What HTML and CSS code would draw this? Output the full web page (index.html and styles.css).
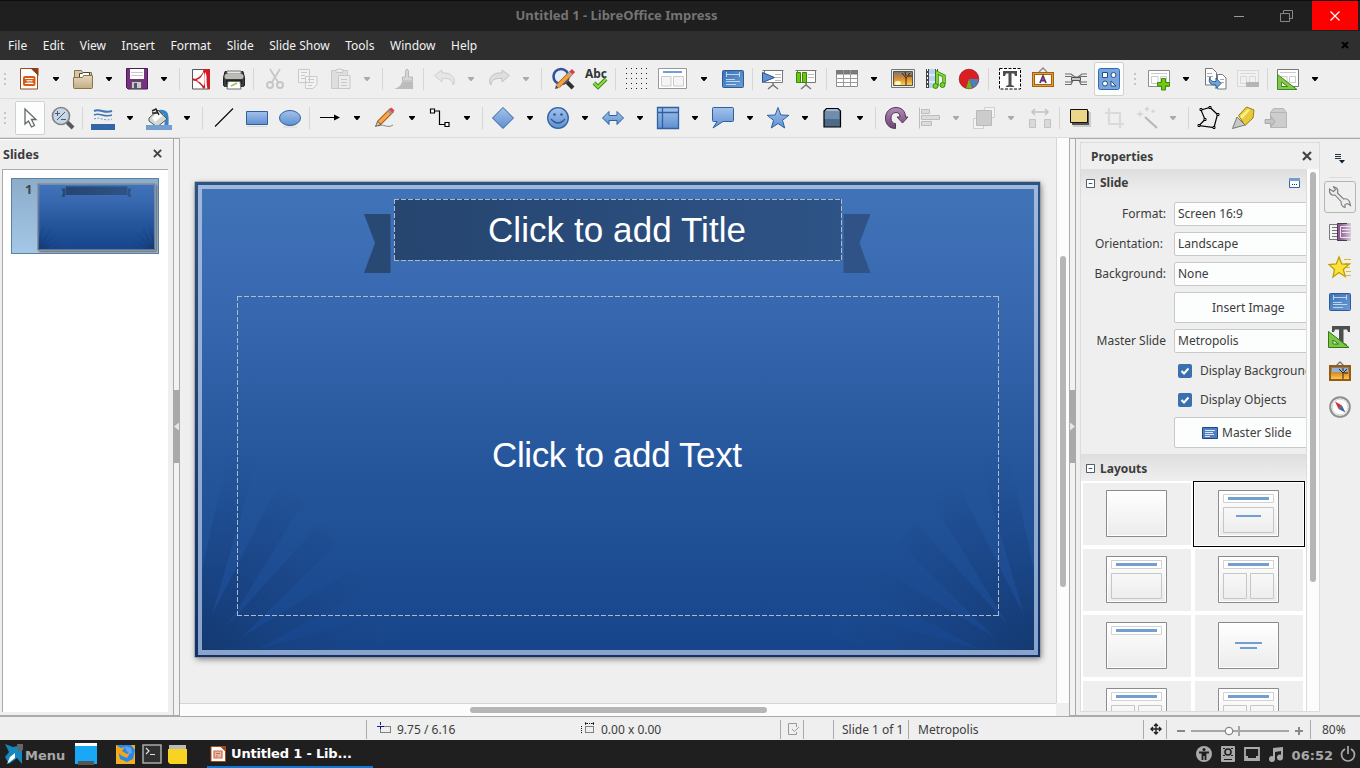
FILE: index.html
```html
<!DOCTYPE html>
<html lang="en">
<head>
<meta charset="utf-8">
<title>Untitled 1 - LibreOffice Impress</title>
<link rel="stylesheet" href="styles.css">
</head>
<body>
<svg class="defs" width="0" height="0">
  <defs>
    <linearGradient id="gBlue" x1="0" y1="0" x2="0" y2="1"><stop offset="0" stop-color="#a3c2ec"/><stop offset="1" stop-color="#5f90d0"/></linearGradient>
    <linearGradient id="gMaster" x1="0" y1="0" x2="1" y2="1"><stop offset="0" stop-color="#3d73b5"/><stop offset="1" stop-color="#6b9bd2"/></linearGradient>
    <linearGradient id="gSlide" x1="0" y1="0" x2="0" y2="1"><stop offset="0" stop-color="#4173b9"/><stop offset=".25" stop-color="#3869b0"/><stop offset=".6" stop-color="#25569c"/><stop offset="1" stop-color="#17458b"/></linearGradient>
    <linearGradient id="gEdge" x1="0" y1="0" x2="0" y2="1"><stop offset="0" stop-color="#2c5384"/><stop offset="1" stop-color="#12316a"/></linearGradient>
    <linearGradient id="gFrame" x1="0" y1="0" x2="0" y2="1"><stop offset="0" stop-color="#a0b8da"/><stop offset="1" stop-color="#8aa3ca"/></linearGradient>
    <linearGradient id="gRibbon" x1="0" y1="0" x2="1" y2="0"><stop offset="0" stop-color="#26456f"/><stop offset="1" stop-color="#2e5386"/></linearGradient>
    <linearGradient id="gTan" x1="0" y1="0" x2="0" y2="1"><stop offset="0" stop-color="#e6d8bb"/><stop offset="1" stop-color="#c3ad85"/></linearGradient>
    <linearGradient id="gPurple" x1="0" y1="0" x2="0" y2="1"><stop offset="0" stop-color="#b48db4"/><stop offset="1" stop-color="#6b4473"/></linearGradient>
    <linearGradient id="gFade" x1="0" y1="0" x2="1" y2="0"><stop offset=".2" stop-color="#8a5b8d"/><stop offset="1" stop-color="#d9c9dc"/></linearGradient>
    <linearGradient id="gGray" x1="0" y1="0" x2="0" y2="1"><stop offset="0" stop-color="#fff"/><stop offset="1" stop-color="#ececec"/></linearGradient>
    <linearGradient id="gSun" x1="0" y1="0" x2="0" y2="1"><stop offset="0" stop-color="#71767a"/><stop offset=".5" stop-color="#d78c34"/><stop offset="1" stop-color="#ffd34a"/></linearGradient>
    <radialGradient id="gRay" gradientUnits="userSpaceOnUse" cx="202" cy="650" r="230"><stop offset="0" stop-color="#143a70"/><stop offset=".3" stop-color="#163d78" stop-opacity=".6"/><stop offset=".65" stop-color="#1b4383" stop-opacity=".25"/><stop offset=".88" stop-color="#234e8e" stop-opacity=".06"/><stop offset="1" stop-color="#234e8e" stop-opacity="0"/></radialGradient>
  </defs>
  <symbol id="slide-art" viewBox="194 181 847 477">
    <path fill="#8b8f96" d="M194.500 181.500h846v476h-846z"/>
    <path fill="url(#gEdge)" d="M195 182h845v475h-845z"/>
    <path fill="url(#gFrame)" d="M198 185h840v470h-840z"/>
    <path fill="url(#gSlide)" d="M202 189h832v461h-832z"/>
    <path id="rays" fill="url(#gRay)" d="M202 650V570L235 420L261 447L212 615L283 475L303 503L228 625L320 523L337 543L242 637L353 570L373 587L258 649L400 610L405 637L345 650z"/>
    <use href="#rays" transform="translate(1236 0) scale(-1 1)"/>
    <path fill="#274974" d="M364 214h26.500v59H364l11-30z"/>
    <path fill="#2f5387" d="M843.500 214h27l-11 29 11 30h-27z"/>
    <path fill="url(#gRibbon)" d="M394 199h447v61h-447z"/>
  </symbol>
  <symbol id="dn" viewBox="0 0 8 4"><path d="M1 0h6v1L4.500 4h-1L1 1z"/></symbol>
  <symbol id="grip" viewBox="0 0 2 14"><path fill="#c6c6c6" d="M0 1h2v2H0zM0 6h2v2H0zM0 11h2v2H0z"/></symbol>

  <symbol id="impress" viewBox="0 0 24 24"><path fill="#fff" stroke="#984b1c" d="M3.500 1.500h11l6 6v14.500h-17z"/><path fill="#8a3f15" d="M13 1h8.500v8z"/><path fill="#fff" d="M14 2l6 6-5 .5z"/><rect x="6" y="9" width="12.500" height="10" rx="2" fill="#d85a14"/><path stroke="#fff" d="M8 11.500h8.500M8 16.500h8.500"/><path stroke="#fff" d="M9.500 13.500h6M9.500 15h6" stroke-width=".8"/></symbol>
  <symbol id="folder" viewBox="0 0 24 24"><path fill="#d8c7a4" stroke="#8c7449" d="M3.500 20V3.500h7l1 2h9V12"/><path fill="#fff" stroke="#444" d="M8.500 14V6.500h3l1-1h6V14"/><path fill="url(#gTan)" stroke="#8c7449" d="M2.500 10.500h9l1-2h9v12q0 1-1 1h-17q-1 0-1-1z"/></symbol>
  <symbol id="save" viewBox="0 0 24 24"><path fill="#783182" stroke="#4b1a57" d="M1.500 1.500h21v20.500H3L1.500 20.500z"/><path fill="#fff" d="M5 2h14v10H5z"/><path stroke="#c8c8c8" d="M6 5.500h12M6 8.500h12"/><path fill="#c9c9c9" stroke="#555" d="M6.500 14.500h10v7h-10z"/><path fill="#556" d="M9 16h3v5H9z"/></symbol>
  <symbol id="pdf" viewBox="0 0 24 24"><path fill="#fff" stroke="#555" d="M3.500 2.500h17v19.500h-17z"/><path fill="#cf1d25" d="M13.500 2H21v20h-2.500c-1-4-1-8-1-12 0-3-1-5-4-8z"/><path fill="none" stroke="#cf1d25" stroke-width="1.800" d="M15.500 2.500C15 7 12 11 4.500 13.500M4 12c6 2 9 5 11 9.500M15.500 3c-1.500 6-1.500 12 0 18"/><path fill="#fff" d="M15 5c-3 5-4 9-8 9 4 0 6 3 8 5z"/></symbol>
  <symbol id="print" viewBox="0 0 24 24"><path fill="#3a3d3b" stroke="#222" d="M3 4.500h18l1.500 6V18q0 1.500-2 1.500h-17q-2 0-2-1.500v-7.500z"/><path fill="#e8eae6" stroke="#777" d="M5 7V4h14v3z"/><rect x="2.500" y="7" width="19" height="5" rx="2" fill="#babdb6"/><path fill="#222" d="M4 13h16v4H4z"/><path fill="#fff" stroke="#6a6d69" d="M6 14.500h12l1 7.500H5z"/><path stroke="#91c84b" stroke-width="1.500" d="M9 19l6-3"/></symbol>
  <symbol id="cut" viewBox="0 0 24 24"><g fill="none" stroke="#c6c6c6" stroke-width="1.700"><path d="M7 2l8 13M17 2L9 15"/><circle cx="7" cy="18" r="3" stroke-width="2"/><circle cx="17" cy="18" r="3" stroke-width="2"/></g></symbol>
  <symbol id="copy" viewBox="0 0 24 24"><g fill="#f2f2f2" stroke="#cacaca"><path d="M2.500 2.500h11v13h-11zM9.500 9.500h11.500v8l-4 4h-7.500z"/><path d="M5 5.500h6M5 8.500h4M5 11.500h4M12 12.500h6M12 15.500h6M12 18.500h4"/></g></symbol>
  <symbol id="paste" viewBox="0 0 24 24"><g fill="#dedede" stroke="#c8c8c8"><path d="M3.500 3.500h16v18h-16z"/><path fill="#ececec" d="M8 5.500v-3h2q1.500-2 3 0h2v3zM10.500 8.500h11.500v13h-11.500z"/><path d="M13 12.500h6M13 15.500h6M13 18.500h6"/></g></symbol>
  <symbol id="brush" viewBox="0 0 24 24"><path fill="#d6d6d6" stroke="#b8b8b8" d="M13.500 3.500q1.500-3 3 0V10h4v4h-10v-4h3z"/><path fill="#bcbcbc" d="M10 14.500h11V22H2c4-1 7-3 8-7.500z"/></symbol>
  <symbol id="undo" viewBox="0 0 24 24"><path fill="#e6e6e6" stroke="#cfcfcf" d="M1.500 8.500L9 3v3c9-1 14 5 12 11l-1 1c0-5-4-7-11-6.500V15z"/></symbol>
  <symbol id="redo" viewBox="0 0 24 24"><path fill="#dedede" stroke="#c2c2c2" d="M22.500 8.500L15 3v3C6 5 1 11 3 17l1 1c0-5 4-7 11-6.500V15z"/></symbol>
  <symbol id="find" viewBox="0 0 24 24"><path stroke="#2e2e2e" stroke-width="4" d="M16 15l6 6"/><circle cx="10" cy="9.500" r="7.500" fill="#e6edf7" stroke="#33509b" stroke-width="2.600"/><path stroke="#a3591b" stroke-width="5" d="M7 19L20 6"/><path stroke="#f6a13a" stroke-width="3.500" d="M7 19L20 6"/><path stroke="#aaa" stroke-width="4.500" d="M18 8l2-2"/><path stroke="#e23b48" stroke-width="4.500" d="M20 6l2.500-2.500"/><path fill="#553" d="M4 22l1-4 3 3z"/></symbol>
  <symbol id="abc" viewBox="0 0 24 24"><text x="1" y="11" textLength="22" lengthAdjust="spacingAndGlyphs" class="abc">Abc</text><path fill="none" stroke="#3c8a14" stroke-width="4" d="M10 16l4 4 8-8"/><path fill="none" stroke="#8bdc45" stroke-width="2" d="M10 16l4 4 8-8"/></symbol>
  <symbol id="dots" viewBox="0 0 24 24"><path stroke="#222" stroke-dasharray="1 4" d="M2 1.500h22M2 6.500h22M2 11.500h22M2 16.500h22M2 21.500h22"/></symbol>
  <symbol id="view" viewBox="0 0 30 24"><path fill="#fff" stroke="#999" d="M.5 1.500h28v20H.5z"/><path stroke="#6d9fd8" stroke-width="2" d="M5 5h19"/><path fill="#f5f5f5" stroke="#ccc" d="M3.500 9.500h9.500v9.500H3.500zM15.500 9.500h10v9.500h-10z"/></symbol>
  <symbol id="master" viewBox="0 0 24 24"><rect x="1.500" y="3.500" width="21" height="17" rx="1" fill="url(#gMaster)" stroke="#2c5c9c"/><path stroke="#c9def5" fill="none" stroke-width=".9" d="M5 7.500h14M5.500 5v5M18.500 5v5M5 12.500h9M5 14.500h14M5 17.500h10"/></symbol>
  <symbol id="play" viewBox="0 0 24 24"><path fill="#fff" stroke="#777" d="M3.500 3.500h18v12h-18zM1.500 3.500h21"/><path stroke="#777" stroke-width="1.500" fill="none" d="M12 16v3M7 22l5-4 5 4"/><path stroke="#bbb" d="M14 7.500h6M14 10.500h6M14 13.500h6"/><path fill="#5e92d3" stroke="#25538e" d="M1.500 5.500l12 5-12 5z"/></symbol>
  <symbol id="playcur" viewBox="0 0 24 24"><path fill="#fff" stroke="#777" d="M3.500 3.500h18v12h-18zM1.500 3.500h21"/><path stroke="#777" stroke-width="1.500" fill="none" d="M12 16v3M7 22l5-4 5 4"/><path stroke="#bbb" d="M14 7.500h6M14 10.500h6"/><path fill="#69c90f" stroke="#3b8505" d="M2.500 5.500h4v10h-4zM8.500 5.500h4v10h-4z"/></symbol>
  <symbol id="table" viewBox="0 0 24 24"><path fill="#fff" stroke="#8b8b8b" d="M1.500 3.500h21v16h-21z"/><path fill="#7a7a7a" d="M1 3h22v4.500H1z"/><path stroke="#9a9a9a" d="M8.500 3v17M15.500 3v17M1 11.500h22M1 15.500h22"/></symbol>
  <symbol id="image" viewBox="0 0 24 24"><path fill="#eee" stroke="#777" d="M.5 2.500h23v18H.5z"/><path fill="url(#gSun)" stroke="#555" d="M2.500 4.500h19v14h-19z"/><path stroke="#3a2410" fill="none" d="M15 18V11l-4-5M15 11l4-5M15 9l-1-4M17 9h4"/><ellipse cx="7" cy="16" rx="3" ry="2" fill="#fffac0"/></symbol>
  <symbol id="media" viewBox="0 0 24 24"><path fill="#444" d="M2 2h12v19H2z"/><path fill="#b9d3ee" d="M5 2h6v19H5z"/><path stroke="#fff" stroke-dasharray="2 2" d="M3.500 2v19M12.500 2v19"/><path stroke="#fff" d="M5 8h6M5 15h6"/><path fill="none" stroke="#3b8a0b" stroke-width="3.500" d="M13 19V5.500L20 9v8"/><path fill="none" stroke="#83db36" stroke-width="1.800" d="M13 19V5.500L20 9v8"/><circle cx="11.500" cy="19" r="2.500" fill="#79d22c" stroke="#3b8a0b"/><circle cx="18.500" cy="18" r="2.500" fill="#79d22c" stroke="#3b8a0b"/></symbol>
  <symbol id="chart" viewBox="0 0 24 24"><circle cx="12" cy="12" r="9.800" fill="#da1e22" stroke="#8e1014" stroke-width=".7"/><path fill="#4c80bd" d="M12 12h9.500q0 6-5.500 9z"/><path fill="#69b52d" d="M12 12l3.500 9.500h-6.500z"/></symbol>
  <symbol id="textbox" viewBox="0 0 24 24"><path fill="#fff" stroke="#000" stroke-dasharray="3 1.500" d="M1.500 1.500h21v20.500h-21z"/><path fill="#4b4f50" d="M5 4h14v5h-2l-1-2.500h-2.500V18l2.500 1v1H8v-1l2.500-1V6.500H8L7 9H5z"/></symbol>
  <symbol id="fontwork" viewBox="0 0 24 24"><path fill="none" stroke="#888" stroke-width="1.300" d="M8 5l4-4 4 4"/><path fill="#fff" stroke="#a6610d" stroke-width="3" d="M2.500 6.500h19v12h-19z"/><path fill="none" stroke="#e2a344" d="M2.500 6.500h19v12h-19z"/><path fill="none" stroke="#5b3272" stroke-width="1.800" d="M9 16L12 9l3 7M10 13.500h4"/></symbol>
  <symbol id="link" viewBox="0 0 24 24"><path fill="none" stroke="#6a6f6b" stroke-width="1.200" d="M1 7h6l4 3h3l4-3h5M1 9.500h6l2 1M23 9.500h-6l-2 1M1 15h6l3-2h4l3 2h6M1 17.500h6l2-4h6l2 4h6"/><path stroke="#555" d="M7.500 10.500h9v3h-9z" fill="#c2c5c0"/></symbol>
  <symbol id="shapes" viewBox="0 0 24 24"><rect x="1.500" y="1.500" width="21" height="21" rx="2" fill="#78a6dc" stroke="#346aaf"/><g fill="#fff" stroke="#214e87"><path d="M5.500 5.500h5v5h-5zM14 14l5 5h-5z"/><circle cx="16.500" cy="8" r="2.500"/><circle cx="8" cy="16.500" r="2.500"/></g></symbol>
  <symbol id="newslide" viewBox="0 0 24 24"><path fill="#fff" stroke="#8d8d8d" d="M1.500 3.500h21v16h-21z"/><path stroke="#ccc" fill="none" d="M4 6.500h16M4.500 9.500h6.500v7H4.500zM13.500 9.500h6v7h-6z"/><path fill="#6dcb12" stroke="#3c8b06" d="M14.500 11.500h4v4h4v3.500h-4v4h-4v-4h-4v-3.500h4z"/></symbol>
  <symbol id="dup" viewBox="0 0 24 24"><path fill="#fff" stroke="#777" d="M2.500 1.500h7l4 4v12.500h-11zM14.500 7.500h5l3.500 3.500v11h-8.500z"/><path stroke="#aaa" d="M4 6.500h5M4 9.500h6M17 12.500h4M17 15.500h4"/><path fill="#6ea6d9" stroke="#275b92" d="M7 10c0 4 3 5 6 4.500V11l5 5.500-5 5v-3.500C7 18 5 15 7 10z"/></symbol>
  <symbol id="del" viewBox="0 0 24 24"><path fill="#f1f1f1" stroke="#d9d9d9" d="M1.500 3.500h21v16h-21zM4 6.500h16M4.500 9.500h6v7h-6zM13.500 9.500h6v7h-6z"/><path fill="#b5b5b5" d="M10 15h13v5H10z"/></symbol>
  <symbol id="layout" viewBox="0 0 24 24"><path fill="#fff" stroke="#777" d="M1.500 2.500h21v17h-21z"/><path stroke="#ccc" fill="none" d="M4 5.500h16M5 9.500h6v6H5zM13.500 9.500h6v6h-6z"/><path fill="#83c752" stroke="#418c17" fill-rule="evenodd" d="M1.500 7.500L21 22.500H1.500zM5.500 15v4.500h6z"/></symbol>

  <symbol id="pointer" viewBox="0 0 24 24"><path fill="#fff" stroke="#666" stroke-width="1.300" d="M7 3v15l3.500-3 3 6 3-1.500-3-6H18z"/></symbol>
  <symbol id="zoom" viewBox="0 0 24 24"><path stroke="#595959" stroke-width="4" d="M16 16l6 6"/><circle cx="10" cy="10" r="8.500" fill="#c7d6e8" stroke="#808587" stroke-width="1.700"/><path stroke="#44505c" stroke-width=".9" d="M4 7.500h5M6.500 5v5M10 13.500h5M6 14l8-8"/></symbol>
  <symbol id="lines" viewBox="0 0 24 24"><path fill="none" stroke="#4475b5" stroke-width="2" d="M3 5c6-3 10 3 18 0"/><path fill="none" stroke="#4475b5" stroke-width="1.500" d="M3 9c6-3 10 3 18 0"/><path fill="none" stroke="#6d95c9" stroke-dasharray="2 1.500" d="M3 13c6-3 10 3 18 0"/><path fill="#3465a4" d="M0 18h24v6H0z"/></symbol>
  <symbol id="fill" viewBox="0 0 26 24"><path fill="none" stroke="#3484c7" stroke-width="4" d="M13 6c8-1 8 3 7.500 13"/><path fill="#d3d7cf" stroke="#555753" d="M3 12l9-8 9 9-8 6.500q-2 1-4 0L3 15z"/><path fill="#fff" d="M6 12l6-6 4 4-7 6z"/><path stroke="#222" stroke-width="1.400" fill="none" d="M6 5l4-2 3 6M6 7h6"/><path fill="#729fcf" d="M0 19h26v6H0z"/></symbol>
  <symbol id="line" viewBox="0 0 24 24"><path stroke="#000" stroke-width="1.100" d="M3 20.500L21 2.500"/></symbol>
  <symbol id="rect" viewBox="0 0 24 24"><path fill="url(#gBlue)" stroke="#2f609f" d="M1.500 5.500h21v13h-21z"/><path stroke="#d8d8d8" d="M2 20.500h20"/></symbol>
  <symbol id="ell" viewBox="0 0 24 24"><ellipse cx="12" cy="12" rx="10.500" ry="7.500" fill="url(#gBlue)" stroke="#2f609f"/><path stroke="#d8d8d8" d="M5 21h14"/></symbol>
  <symbol id="arrow" viewBox="0 0 24 24"><path stroke="#000" d="M2 11.500h15"/><path d="M16 8.500l6 3-6 3z"/></symbol>
  <symbol id="pencil" viewBox="0 0 24 24"><path stroke="#888" fill="none" d="M5 20c6-3 9 3 15-1"/><path stroke="#a3591b" stroke-width="5.500" d="M6 17L19 4"/><path stroke="#f9a74a" stroke-width="3.500" d="M6 17L17 6"/><path stroke="#999" stroke-width="4.500" d="M16 7l2-2"/><path stroke="#ec4350" stroke-width="4.500" d="M18 5l2-2"/><path fill="#e8c99b" stroke="#333" stroke-width=".7" d="M2.500 20.500l2-5 3.500 3z"/></symbol>
  <symbol id="conn" viewBox="0 0 24 24"><path fill="none" stroke="#000" stroke-width="1.200" d="M6 5h5.500v13.500H17"/><path fill="#fff" stroke="#000" stroke-width="1.200" d="M2.500 3h4v4h-4zM17 16.500h4v4h-4z"/></symbol>
  <symbol id="diamond" viewBox="0 0 24 24"><path fill="url(#gBlue)" stroke="#2f609f" d="M12 1.500L22.500 12 12 22.500 1.500 12z"/></symbol>
  <symbol id="smile" viewBox="0 0 24 24"><circle cx="12" cy="12" r="10.300" fill="url(#gBlue)" stroke="#2f609f" stroke-width="1.300"/><circle cx="8.500" cy="8.500" r="1.300" fill="#2b5893"/><circle cx="15.500" cy="8.500" r="1.300" fill="#2b5893"/><path fill="none" stroke="#2b5893" stroke-width="1.300" d="M5 13q7 8 14 0"/></symbol>
  <symbol id="dbl" viewBox="0 0 24 24"><path fill="url(#gBlue)" stroke="#2f609f" d="M1.500 12L8 5.500v4h8v-4l6.500 6.500-6.500 6.500v-4H8v4z"/></symbol>
  <symbol id="flow" viewBox="0 0 24 24"><path fill="url(#gBlue)" stroke="#2f609f" stroke-width="1.300" d="M1.500 1.500h21v21h-21zM6.500 1.500v21M1.500 6.500h21"/></symbol>
  <symbol id="call" viewBox="0 0 24 24"><path fill="url(#gBlue)" stroke="#2f609f" d="M2.500 1.500h19q1 0 1 1v12q0 1-1 1H12L2 22l4-6.500H2.500q-1 0-1-1v-12q0-1 1-1z"/></symbol>
  <symbol id="star" viewBox="0 0 24 24"><path fill="url(#gBlue)" stroke="#2f609f" d="M12 1.500l2.800 7.500 8 .3-6.300 5 2.200 7.700L12 17.500 5.300 22l2.200-7.700-6.300-5 8-.3z"/></symbol>
  <symbol id="cube" viewBox="0 0 24 24"><path fill="#4d6a88" stroke="#000" stroke-width="1.200" d="M6.500 2.500h11.500l2.500 2.500v16H4V5z"/><path fill="#9db8d3" d="M5 5.500l2-2.500h10.500l2.500 2.500z"/><path fill="#6f8eae" d="M4.800 6h14.500v7H4.800z"/></symbol>
  <symbol id="rotate" viewBox="0 0 24 24"><path fill="url(#gPurple)" stroke="#59345f" d="M11.500 22.500C5 22.500 1.500 18 1.500 12S6 1.500 12 1.500s9.500 4 9.500 9.500h2.500l-5.500 6-5.500-6h3q0-4.500-4-4.500c-3 0-5 2-5 5.500s1.500 5.500 4.500 5.500z"/></symbol>
  <symbol id="align" viewBox="0 0 24 24"><path fill="#dcdcdc" stroke="#bdbdbd" d="M1.500 1.500v21M3.500 3.500h8v4h-8zM3.500 9.500h18v4h-18zM3.500 15.500h10v4h-10z"/></symbol>
  <symbol id="arr" viewBox="0 0 24 24"><g stroke="#cfcfcf" fill="#f4f4f4"><path d="M12.500 1.500h10v10h-10zM1.500 12.500h10v10h-10z"/><path fill="#ccc" stroke="#b9b9b9" d="M4.500 4.500h15v15h-15z"/></g></symbol>
  <symbol id="dist" viewBox="0 0 24 24"><g fill="#d9d9d9" stroke="#c2c2c2"><path d="M1.500 13.500h6v8h-6zM16.500 13.500h6v8h-6z"/><path fill="none" stroke-width="1.500" d="M4 6h16M7 3L4 6l3 3M17 3l3 3-3 3"/></g></symbol>
  <symbol id="shadow" viewBox="0 0 24 24"><path fill="#ccc" d="M5 6h18v15H5z"/><path fill="#555" d="M4 5h17v14H4z"/><path fill="#ecd68a" stroke="#111" d="M2.500 3.500h17v13h-17z"/></symbol>
  <symbol id="crop" viewBox="0 0 24 24"><path fill="none" stroke="#dadada" stroke-width="2.200" d="M7 2v16h15M3 7h15v15"/></symbol>
  <symbol id="magic" viewBox="0 0 24 24"><path stroke="#b6b6b6" stroke-width="2" d="M10 11l12 11"/><path fill="#d4d4d4" d="M5 4l1 3 3 1-3 1-1 3-1-3-3-1 3-1zM12 0l1 2 2 1-2 1-1 2-1-2-2-1 2-1zM18 3l1 2h1l-1 2-3-1z"/></symbol>
  <symbol id="points" viewBox="0 0 24 24"><path fill="none" stroke="#000" stroke-width="1.200" d="M4 4l9-2.500 7.500 7L17 21.500 2 19.500l6-6z"/><path fill="#fff" stroke="#000" d="M3 2.500h2v2H3zM12 .5h2v2h-2zM20 7.500h2v2h-2zM16 20.500h2v2h-2zM1 18.500h2v2H1zM7 12.500h2v2H7z"/></symbol>
  <symbol id="glue" viewBox="0 0 24 24"><path fill="#e9c93c" stroke="#a07e09" d="M7.500 9.500l8-8.500 7.500 3-1 8-8 7.500z"/><path fill="#fbf08e" d="M9 10.500l8-7.500 2 1-8 9z"/><path fill="#c9cac6" stroke="#777" d="M1.500 22.500L6 11l8 8z"/></symbol>
  <symbol id="gal" viewBox="0 0 24 24"><path fill="#cdcdcd" stroke="#b5b5b5" d="M6.500 6.500l3-4h10l3 4v15h-16zM6 6.500h16"/><path fill="#c4c4c4" stroke="#acacac" d="M1 13.500h6v-3l4 5-4 5v-3H1z"/></symbol>

  <symbol id="wrench" viewBox="0 0 24 24"><path fill="#ececea" stroke="#7b7d79" stroke-width="1.100" d="M5 1.500l3.500 1.500q2 2 1 5l6 6q4-1 6 2.500l1 4-3-2-2.500 1 0 3q-4-1-4-6l-6-6.500Q3 11 1.500 7V4l4 2.500 2-2z"/></symbol>
  <symbol id="trans" viewBox="0 0 24 24"><path fill="#f5f5f5" stroke="#777" d="M1.500 4.500h10v15h-10zM4 7.500h5M4 10.500h5M4 13.500h5M4 16.500h5"/><path fill="url(#gFade)" d="M9 3h14v18H9z"/><path stroke="#573360" fill="none" d="M19 3.500H9.500v17H19"/><path stroke="#f0e4f1" fill="none" d="M23 6.500H12.500v11H23M14 9.500h8M14 12.500h8"/></symbol>
  <symbol id="anim" viewBox="0 0 24 24"><path stroke="#d9b92f" stroke-width="1.200" d="M16 4.500h7M17 8.500h6M17 12.500h5M18 16.500h5M18 20.500h5"/><path fill="#fbe33b" stroke="#c0a000" stroke-width="1.300" d="M11 2l2.800 7 7 .5-5.500 5 2 7L11 17.500 5 22l1.500-7.500L1 9.500 8.300 9z"/></symbol>
  <symbol id="styles" viewBox="0 0 24 24"><path fill="#4b4f50" d="M4 1h18v6h-2l-1-2.500h-3.500V18l3 1v1H9v-1l2-1V4.500H7L6 7H4z"/><path fill="#79c846" stroke="#33790f" fill-rule="evenodd" d="M.5 6.500L21 22.500H.5zM5 15v4h5.500z"/></symbol>
  <symbol id="gallery" viewBox="0 0 24 24"><path fill="none" stroke="#777" stroke-width="1.300" d="M8 6l4-4 4 4"/><path fill="url(#gSun)" stroke="#965b13" stroke-width="2" d="M2 6h20v14H2z"/><path fill="#8fb3d6" d="M4 8h16v4H4z"/><path stroke="#3a2410" fill="none" d="M15 19v-6l-4-4M15 13l4-4M15 11V8M16 13h4"/></symbol>
  <symbol id="nav" viewBox="0 0 24 24"><circle cx="12" cy="12" r="9.800" fill="#fff" stroke="#8d908d" stroke-width="2"/><circle cx="12" cy="12" r="7.800" fill="none" stroke="#ccc" stroke-width=".8"/><path fill="#d92c2c" d="M7 6.500l7 4-3.500 3.500z"/><path fill="#3f6aa5" d="M17.500 17.500L14 10.500 10.500 14z"/></symbol>
  <symbol id="lt" viewBox="0 0 61 47"><path fill="#fff" stroke="#8b8b8b" d="M.5.500h60v46H.5z"/><path fill="url(#gGray)" d="M2 2h57v43H2z"/></symbol>
  <symbol id="lh" viewBox="0 0 61 47"><use href="#lt"/><path fill="#fff" stroke="#d2d2d2" d="M5.500 4.500h50v8h-50z"/><path fill="#729fcf" d="M10 7h41v3H10z"/></symbol>
  <symbol id="l2" viewBox="0 0 61 47"><use href="#lh"/><path fill="none" stroke="#c6c6c6" d="M5.500 17.500h23v25h-23zM32.500 17.500h23v25h-23z"/></symbol>
  <symbol id="l1" viewBox="0 0 61 47"><use href="#lh"/><path fill="none" stroke="#c6c6c6" d="M5.500 17.500h50v25h-50z"/></symbol>
</svg>

<div class="app">
  <header class="titlebar">
    <span class="title">Untitled 1 - LibreOffice Impress</span>
    <svg class="winbtn" viewBox="0 0 46 29"><path stroke="#999" d="M18 15.500h10"/></svg>
    <svg class="winbtn mid" viewBox="0 0 46 29"><path fill="none" stroke="#888" d="M16.500 12.500h9v8h-9zM19.500 12v-2.500h9v8H26"/></svg>
    <svg class="winbtn close" viewBox="0 0 46 29"><path stroke="#fff" stroke-width="1.200" d="M18.500 10.500l9 9M27.500 10.500l-9 9"/></svg>
  </header>
  <nav class="menubar">
    <span>File</span><span>Edit</span><span>View</span><span>Insert</span><span>Format</span><span>Slide</span><span>Slide Show</span><span>Tools</span><span>Window</span><span>Help</span>
    <svg class="docx" viewBox="0 0 8 8"><path stroke="#000" stroke-width="2" d="M1 0l6 6M7 0L1 6"/></svg>
  </nav>
  <div class="toolbar std">
    <svg class="grip"><use href="#grip"/></svg>
    <svg class="ic"><use href="#impress"/></svg><svg class="dn"><use href="#dn"/></svg>
    <svg class="ic"><use href="#folder"/></svg><svg class="dn"><use href="#dn"/></svg>
    <svg class="ic"><use href="#save"/></svg><svg class="dn"><use href="#dn"/></svg>
    <i class="sep"></i>
    <svg class="ic"><use href="#pdf"/></svg><svg class="ic"><use href="#print"/></svg>
    <i class="sep"></i>
    <svg class="ic"><use href="#cut"/></svg><svg class="ic"><use href="#copy"/></svg><svg class="ic"><use href="#paste"/></svg><svg class="dn off"><use href="#dn"/></svg>
    <i class="sep"></i>
    <svg class="ic"><use href="#brush"/></svg>
    <i class="sep"></i>
    <svg class="ic"><use href="#undo"/></svg><svg class="dn off"><use href="#dn"/></svg>
    <svg class="ic"><use href="#redo"/></svg><svg class="dn off"><use href="#dn"/></svg>
    <i class="sep"></i>
    <svg class="ic"><use href="#find"/></svg><svg class="ic"><use href="#abc"/></svg>
    <i class="sep"></i>
    <svg class="ic"><use href="#dots"/></svg><svg class="ic w30"><use href="#view"/></svg><svg class="dn"><use href="#dn"/></svg>
    <svg class="ic"><use href="#master"/></svg>
    <i class="sep"></i>
    <svg class="ic"><use href="#play"/></svg><svg class="ic"><use href="#playcur"/></svg>
    <i class="sep"></i>
    <svg class="ic"><use href="#table"/></svg><svg class="dn"><use href="#dn"/></svg>
    <svg class="ic"><use href="#image"/></svg><svg class="ic"><use href="#media"/></svg><svg class="ic"><use href="#chart"/></svg>
    <i class="sep"></i>
    <svg class="ic"><use href="#textbox"/></svg><svg class="ic"><use href="#fontwork"/></svg><svg class="ic"><use href="#link"/></svg>
    <span class="active"><svg class="ic"><use href="#shapes"/></svg></span>
    <svg class="grip"><use href="#grip"/></svg>
    <svg class="ic"><use href="#newslide"/></svg><svg class="dn"><use href="#dn"/></svg>
    <svg class="ic"><use href="#dup"/></svg><svg class="ic"><use href="#del"/></svg>
    <i class="sep"></i>
    <svg class="ic"><use href="#layout"/></svg><svg class="dn"><use href="#dn"/></svg>
  </div>
  <div class="toolbar draw">
    <svg class="grip"><use href="#grip"/></svg>
    <span class="active"><svg class="ic"><use href="#pointer"/></svg></span>
    <svg class="ic"><use href="#zoom"/></svg>
    <i class="sep"></i>
    <svg class="ic"><use href="#lines"/></svg><svg class="dn"><use href="#dn"/></svg>
    <svg class="ic w26"><use href="#fill"/></svg><svg class="dn"><use href="#dn"/></svg>
    <i class="sep"></i>
    <svg class="ic"><use href="#line"/></svg><svg class="ic"><use href="#rect"/></svg><svg class="ic"><use href="#ell"/></svg>
    <i class="sep"></i>
    <svg class="ic"><use href="#arrow"/></svg><svg class="dn"><use href="#dn"/></svg>
    <svg class="ic"><use href="#pencil"/></svg><svg class="dn"><use href="#dn"/></svg>
    <svg class="ic"><use href="#conn"/></svg><svg class="dn"><use href="#dn"/></svg>
    <i class="sep"></i>
    <svg class="ic"><use href="#diamond"/></svg><svg class="dn"><use href="#dn"/></svg>
    <svg class="ic"><use href="#smile"/></svg><svg class="dn"><use href="#dn"/></svg>
    <svg class="ic"><use href="#dbl"/></svg><svg class="dn"><use href="#dn"/></svg>
    <svg class="ic"><use href="#flow"/></svg><svg class="dn"><use href="#dn"/></svg>
    <svg class="ic"><use href="#call"/></svg><svg class="dn"><use href="#dn"/></svg>
    <svg class="ic"><use href="#star"/></svg><svg class="dn"><use href="#dn"/></svg>
    <svg class="ic"><use href="#cube"/></svg><svg class="dn"><use href="#dn"/></svg>
    <i class="sep"></i>
    <svg class="ic"><use href="#rotate"/></svg><svg class="ic"><use href="#align"/></svg><svg class="dn off"><use href="#dn"/></svg>
    <svg class="ic"><use href="#arr"/></svg><svg class="dn off"><use href="#dn"/></svg>
    <svg class="ic"><use href="#dist"/></svg>
    <i class="sep"></i>
    <svg class="ic"><use href="#shadow"/></svg><svg class="ic"><use href="#crop"/></svg><svg class="ic"><use href="#magic"/></svg><svg class="dn off"><use href="#dn"/></svg>
    <i class="sep"></i>
    <svg class="ic"><use href="#points"/></svg><svg class="ic"><use href="#glue"/></svg><svg class="ic"><use href="#gal"/></svg>
  </div>

  <main class="work">
    <aside class="slides">
      <div class="slides-head"><b>Slides</b><svg class="x" viewBox="0 0 10 10"><path stroke="#444" stroke-width="2.200" d="M1 1l8 8M9 1L1 9"/></svg></div>
      <div class="list">
        <div class="item"><span>1</span><svg viewBox="194 181 847 477" preserveAspectRatio="none"><use href="#slide-art" x="194" y="181" width="847" height="477"/></svg></div>
      </div>
    </aside>
    <div class="splitter"><svg class="handle" viewBox="0 0 7 73"><path fill="#e6e6e6" d="M1 36.500l5-4v8z"/></svg></div>
    <section class="center">
      <div class="row">
        <svg class="canvas" viewBox="180 138 876 565">
          <g class="slide-shadow"><path fill="#777" d="M195 182h845v475h-845z"/></g>
          <use href="#slide-art" x="194" y="181" width="847" height="477"/>
          <path class="ph" d="M394 199.500H842M394 260.500H842M394.500 199V261M841.500 199V261M237 296.500H999M237 615.500H999M237.500 296V616M998.500 296V616"/>
          <text class="phtext" x="488" y="242" textLength="258">Click to add Title</text>
          <text class="phtext" x="492" y="467" textLength="250">Click to add Text</text>
        </svg>
        <div class="vscroll"><i></i></div>
      </div>
      <div class="hscroll"><i></i></div>
    </section>
    <div class="splitter"><svg class="handle" viewBox="0 0 7 73"><path fill="#e6e6e6" d="M6 36.500l-5-4v8z"/></svg></div>
    <aside class="deck">
      <div class="deck-head"><b>Properties</b><svg class="x" viewBox="0 0 10 10"><path stroke="#444" stroke-width="2.200" d="M1 1l8 8M9 1L1 9"/></svg></div>
      <div class="deck-body">
        <div class="panels">
          <div class="sec"><svg viewBox="0 0 10 10"><path fill="#fff" stroke="#345" d="M.5.500h9v9h-9zM3 5h4"/></svg><b>Slide</b><svg class="more" viewBox="0 0 11 10"><path fill="#fff" stroke="#3465a4" d="M.5.500h10v9H.5z"/><path fill="#729fcf" d="M0 0h11v3H0z"/><path stroke="#234" d="M3 6.500h1M5 6.500h1M7 6.500h1"/></svg></div>
          <div class="form">
            <label>Format:</label><div class="field">Screen 16:9</div>
            <label>Orientation:&nbsp;</label><div class="field">Landscape</div>
            <label>Background:</label><div class="field">None</div>
            <div class="button">Insert Image</div>
            <label>Master Slide</label><div class="field">Metropolis</div>
            <div class="check"><svg viewBox="0 0 14 14"><rect width="14" height="14" rx="2" fill="#3a70ae"/><path fill="none" stroke="#fff" stroke-width="2" d="M3.500 7l2.500 2.500 4.500-5"/></svg>Display Background</div>
            <div class="check"><svg viewBox="0 0 14 14"><rect width="14" height="14" rx="2" fill="#3a70ae"/><path fill="none" stroke="#fff" stroke-width="2" d="M3.500 7l2.500 2.500 4.500-5"/></svg>Display Objects</div>
            <div class="button ms"><svg viewBox="0 0 16 12"><path fill="#5080c0" stroke="#1f4585" d="M.5.500h15v11H.5z"/><path stroke="#dbe8f8" d="M3 3.500h10M3 5.500h8M3 7.500h9M3 9.500h5"/></svg>Master Slide</div>
          </div>
          <div class="sec lay"><svg viewBox="0 0 10 10"><path fill="#fff" stroke="#345" d="M.5.500h9v9h-9zM3 5h4"/></svg><b>Layouts</b></div>
          <div class="layouts">
            <div><svg><use href="#lt"/></svg></div>
            <div class="sel"><svg viewBox="0 0 61 47"><use href="#l1"/><path fill="#729fcf" d="M18 25h25v2H18z"/></svg></div>
            <div><svg><use href="#l1"/></svg></div>
            <div><svg><use href="#l2"/></svg></div>
            <div><svg><use href="#lh"/></svg></div>
            <div><svg viewBox="0 0 61 47"><use href="#lt"/><path fill="#729fcf" d="M17 20h27v2H17zM22 25h17v2H22z"/></svg></div>
            <div><svg><use href="#l2"/></svg></div>
            <div><svg><use href="#l2"/></svg></div>
          </div>
        </div>
        <div class="pscroll"><i></i></div>
      </div>
    </aside>
    <nav class="tabs">
      <svg class="tabmenu" viewBox="0 0 12 10"><path stroke="#234" d="M1 .5h6M1 2.500h6M1 4.500h6"/><path d="M5 6h6L8 9.500z" fill="#123"/></svg>
      <hr>
      <span class="tab-on"><svg class="ic"><use href="#wrench"/></svg></span>
      <svg class="ic"><use href="#trans"/></svg>
      <svg class="ic"><use href="#anim"/></svg>
      <svg class="ic"><use href="#master"/></svg>
      <svg class="ic"><use href="#styles"/></svg>
      <svg class="ic"><use href="#gallery"/></svg>
      <svg class="ic"><use href="#nav"/></svg>
    </nav>
  </main>

  <footer class="status">
    <div class="s-empty"></div>
    <div class="s-pos"><svg viewBox="0 0 14 12"><path stroke="#1515c0" stroke-dasharray="3 1" d="M0 4.500h7M3.500 0v8"/><path fill="none" stroke="#111" stroke-dasharray="1 1" d="M3.500 4.500h10v6h-10z"/></svg><span>9.75 / 6.16</span></div>
    <div class="s-size"><svg viewBox="0 0 14 12"><path fill="none" stroke="#111" stroke-dasharray="1 1" d="M4.500 4.500h8v6h-8zM.5 4v7M4 1.500h9"/><path d="M4 0v3L6 1.500zM13 0v3l-2-1.500z"/></svg><span>0.00 x 0.00</span></div>
    <div class="s-doc"><svg viewBox="0 0 12 12"><path fill="none" stroke="#999" d="M8.500 4V.500h-8v11h8V9M4 6l2.500 2.500L11 4"/></svg></div>
    <div class="s-gap"></div>
    <div class="s-slide">Slide 1 of 1</div>
    <div class="s-name">Metropolis</div>
    <div class="s-fit"><svg viewBox="0 0 12 12"><path fill="none" stroke="#222" stroke-width="1.400" d="M6 1v10M1 6h10M4 3l2-2 2 2M4 9l2 2 2-2M3 4L1 6l2 2M9 4l2 2-2 2"/></svg></div>
    <div class="s-zoom"><svg viewBox="0 0 143 18"><path stroke="#a6a6a6" stroke-width="2" d="M24 10h98M72 5v10"/><path stroke="#888" stroke-width="2" d="M10 10h8M128 10h8M132 6v8"/><circle cx="62" cy="10" r="3.700" fill="#fff" stroke="#888" stroke-width="1.300"/></svg></div>
    <div class="s-pct">80%</div>
  </footer>
  <footer class="taskbar">
    <svg class="logo" viewBox="0 0 18 20"><path fill="#1687bd" d="M0 0l8 3 9-2v19l-5-6-8 6-4-7 4-5z"/><path fill="#666" d="M12 0h6v6l-5 2z"/><path fill="#fff" d="M2 20l3-7 5-4v5z"/></svg>
    <span class="tmenu">Menu</span>
    <svg class="desk" viewBox="0 0 22 22"><path fill="#18a8f6" d="M0 0h22v21H0z"/><path fill="#fff" d="M0 0h22v3H0z"/><path fill="#555" d="M3 18h16v4H3z"/></svg>
    <svg class="app-ic" viewBox="0 0 20 20"><path fill="#f2b01e" d="M0 1h19v19H0z"/><path fill="#2a86e8" d="M1 1h14l4 5-2 9-6 3-7-3z"/><path fill="#f0a51b" d="M1 2l4 2 4-1-3 4 5 3 3-1-3 5-5-2-5-4z"/><path fill="#5fa8ee" d="M9 2l6 2 1 5-3 1-3-4z"/></svg>
    <svg class="app-ic" viewBox="0 0 20 20"><path fill="#303030" stroke="#aaa" stroke-width="1.500" d="M1 1h18v18H1z"/><path stroke="#ddd" fill="none" stroke-width="1.200" d="M4 4l3 3-3 3M8 10.500h5"/></svg>
    <svg class="app-ic" viewBox="0 0 20 20"><path fill="#bbb" d="M1 1h17v6H1z"/><path fill="#f8d322" d="M0 5h19v15H2l-2-2z"/></svg>
    <div class="task"><svg viewBox="0 0 16 16"><path fill="#fff" stroke="#a4481a" d="M1 .500h10l4.500 4.500v10.500H1z"/><path fill="#a4481a" d="M10 0h6v6z"/><path fill="#e9b9a6" stroke="#c96a48" stroke-width="1.200" d="M4 5h8v7H4zM6 7.500h4M6 10h2"/></svg><b>Untitled 1 - Lib...</b></div>
    <div class="tray">
      <svg viewBox="0 0 16 16"><circle cx="8" cy="8" r="8" fill="#aaa"/><circle cx="8" cy="3.500" r="1.500" fill="#1f1f1f"/><path stroke="#1f1f1f" stroke-width="1.800" fill="none" d="M3 6.500h10M8 6v4M6.500 14V6.500M9.500 14V6.500"/></svg>
      <svg viewBox="0 0 16 16"><rect x="1" width="14" height="16" rx="1" fill="#aaa"/><circle cx="8" cy="6" r="3" fill="none" stroke="#1f1f1f" stroke-width="1.600"/><path stroke="#1f1f1f" d="M3 2.500h2M11 2.500h2M3 9.500h2M11 9.500h2M4 13.500h8"/></svg>
      <svg viewBox="0 0 16 16"><path fill="none" stroke="#aaa" stroke-width="1.800" d="M1 2h14v12H1z"/><path fill="#aaa" d="M1 10h3v2h8v-2h3v4.500H1z"/></svg>
      <svg viewBox="0 0 16 16"><path fill="#aaa" d="M5 2l10-1v10h-2V5L7 6v7H5z"/><circle cx="4" cy="13" r="3" fill="#aaa"/><circle cx="12" cy="11.500" r="3" fill="#aaa"/></svg>
      <b>06:52</b>
      <svg class="power" viewBox="0 0 16 16"><path fill="none" stroke="#aaa" stroke-width="1.700" d="M5 3Q1.500 5 1.500 8.500a6.500 6.500 0 0 0 13 0Q14.500 5 11 3M8 0v8"/></svg>
    </div>
  </footer>
</div>
</body>
</html>
```
FILE: styles.css
```css
* { box-sizing: border-box; }
body { margin: 0; width: 1360px; height: 768px; overflow: hidden; font: 12px/16px "Noto Sans", sans-serif; color: #3c3c3c; background: #efefef; }
svg { display: block; flex: none; }
.defs { position: absolute; }
.app { display: flex; flex-direction: column; height: 768px; }

.titlebar { height: 31px; padding: 0 2px 1px 0; display: flex; background: #1f1f1f; border-top: 1px solid #0c0c0c; }
.title { flex: 1; padding-left: 17px; text-align: center; font-weight: 700; font-size: 13px; line-height: 29px; color: #747474; }
.winbtn { width: 46px; height: 29px; }
.mid { margin: 0 2px; }
.close { background: #f00; }
.menubar { height: 29px; display: flex; align-items: center; gap: 15.550px; padding: 0 11px 0 8px; background: #2f2f2f; color: #f2f2f2; }
.docx { width: 8px; height: 8px; margin-left: auto; }

.toolbar { display: grid; align-items: center; justify-content: start; height: 39px; border-bottom: 1px solid #dcdcdc; background: #efefef; }
.toolbar > * { justify-self: end; transform: translateX(50%); }
.std { grid-template-columns: 5px 24px 27px 27px 26px 28px 27px 16px 21px 33px 20px 21px 33px 32px 27px 16px 21px 20px 21px 26px 28px 27px 16px 21px 33px 20px 20px 37px 31px 29px 20px 20px 33px 21px 20px 27px 29px 33px 33px 20px 21px 33px 33px 33px 26px 24px 27px 29px 33px 20px 20px 27px; }
.draw { grid-template-columns: 5px 25px 33px 20px 20px 27px 29px 28px 16px 21px 33px 33px 20px 20px 27px 28px 27px 28px 27px 16px 20px 27px 28px 27px 28px 27px 28px 27px 28px 27px 28px 27px 27px 28px 16px 20px 34px 26px 28px 27px 29px 20px 20px 34px 33px 26px 16px 20px 34px 33px; }
.ic { width: 24px; height: 24px; }
.w30 { width: 30px; }
.w26 { width: 26px; }
.dn { width: 8px; height: 4px; margin-left: 1px; }
.dn.off { fill: #aaa; }
.grip { width: 2px; height: 14px; }
.sep { width: 2px; height: 22px; border-left: 1px solid #d6d6d6; }
.active { width: 30px; height: 34px; display: flex; align-items: center; justify-content: center; background: #fcfdfd; border: 1px solid #d0d0d0; border-radius: 2px; }
.abc { font: 700 12.500px "Noto Sans", sans-serif; fill: #2e3436; }

.work { flex: 1; display: flex; min-height: 0; }
.slides { width: 173px; border-top: 1px solid #aaa; border-bottom: 1px solid #aaa; display: flex; flex-direction: column; padding-bottom: 3px; }
.slides-head { height: 30px; display: flex; align-items: center; justify-content: space-between; padding: 1px 11px 0 3px; font-size: 12.500px; border-top: 1px solid #fff; }
.x { width: 10px; height: 10px; }
.slides-head .x { margin-bottom: 3px; width: 9px; height: 9px; }
.list { flex: 1; width: 166px; margin-left: 2px; background: #fff; border-left: 1px solid #aaa; border-top: 1px solid #aaa; padding: 8px; }
.item { width: 148px; height: 76px; border: 1px solid #5b82a3; background: linear-gradient(#8badca, #a5c7e7); display: flex; padding: 4px 2px 0 13px; }
.item span { font-weight: 700; font-size: 13px; line-height: 13px; width: 12px; color: #454545; }
.item svg { width: 118px; height: 67px; border: solid #8f949c; border-width: 1px 0 0 1px; box-shadow: 1px 1px 0 #8f949c, 2px 2px 2px #666; }
.splitter { width: 7px; border: 1px solid #aaa; background: #f2f2f2; position: relative; }
.handle { position: absolute; left: -1px; top: 251px; width: 7px; height: 73px; background: #a9a9a9; }
.center { width: 889px; display: flex; flex-direction: column; }
.row { display: flex; height: 565px; }
.canvas { width: 876px; height: 565px; }
.slide-shadow { filter: blur(3px); transform: translate(1px, 2px); }
.ph { fill: none; stroke: #afbac9; stroke-dasharray: 5 2; }
.phtext { font: 35px "Liberation Sans", Arial, sans-serif; fill: #fff; }
.vscroll { width: 13px; border-left: 1px solid #d6d6d6; background: #fcfcfc; padding: 118px 0 0 3px; flex: none; }
.vscroll i { display: block; width: 6px; height: 331px; border-radius: 3px; background: #b6b6b6; }
.hscroll { flex: 1; border-top: 1px solid #d6d6d6; background: #fcfcfc; padding: 3px 0 0 290px; width: 876px; }
.hscroll i { display: block; width: 297px; height: 6px; border-radius: 3px; background: #b6b6b6; }

.deck { width: 244px; padding: 3px 0 3px 4px; border-top: 1px solid #aaa; border-bottom: 1px solid #aaa; display: flex; flex-direction: column; }
.deck-head { height: 27px; display: flex; align-items: center; justify-content: space-between; padding: 1px 7px 0 10px; border: 1px solid #dcdcdc; border-bottom: 0; }
.deck-head .x { margin-bottom: 1px; }
.deck-body { flex: 1; min-height: 0; display: flex; border: 1px solid #dcdcdc; border-top: 0; }
.panels { width: 226px; overflow: hidden; border-right: 1px solid #dcdcdc; }
.pscroll { flex: 1; padding: 3px 0 0 3px; background: #fcfcfc; }
.pscroll i { display: block; width: 6px; height: 410px; border-radius: 3px; background: #b6b6b6; }
.sec { height: 26px; display: flex; align-items: center; padding: 2px 6px 0 5px; background: linear-gradient(#dedede, #efefef); }
.sec b { margin-left: 5px; }
.sec svg { width: 9px; height: 9px; }
.sec .more { width: 11px; height: 10px; margin-left: auto; }
.form { height: 259px; padding-top: 7px; display: grid; grid-template-columns: 85px 140px; column-gap: 8px; align-content: start; grid-template-rows: 24px 24px 24px 31px 24px 14px 14px 31px; row-gap: 6px; }
.form label { text-align: right; line-height: 23px; }
.field, .button { background: #fcfdfd; border: 1px solid #c9c9c9; border-radius: 2px; padding-left: 3px; line-height: 22px; }
.button { grid-column: 2; line-height: 30px; padding-left: 37px; white-space: nowrap; }
.check { grid-column: 2; display: flex; align-items: center; gap: 8px; padding-left: 4px; height: 14px; white-space: nowrap; margin-top: 5px; }
.check svg { width: 14px; height: 14px; }
.check + .check { margin-top: 14px; }
.ms { display: flex; align-items: center; padding-left: 27px; gap: 4px; height: 31px; margin-top: 18px; }
.ms svg { width: 16px; height: 12px; }
.lay { height: 27px; }
.layouts { display: grid; grid-template-columns: 108px 108px; grid-auto-rows: 62px; gap: 4px; padding: 2px; background: #fff; }
.layouts div { background: #efefef; padding: 7px 0 0 23px; }
.layouts .sel { outline: 1px solid #000; outline-offset: 1px; }
.layouts svg { width: 61px; height: 47px; }
.tabs { flex: 1; border-top: 1px solid #aaa; border-bottom: 1px solid #aaa; display: flex; flex-direction: column; align-items: center; gap: 11px; padding-top: 15px; }
.tabmenu { width: 12px; height: 10px; }
.tabs hr { width: 23px; height: 1px; border: 0; background: #dcdcdc; margin: 2px 0 -8px; }
.tab-on { width: 32px; height: 32px; border: 1px solid #b5b5b5; border-radius: 3px; display: grid; place-items: center; margin-bottom: -4px; }

.status { height: 24px; display: flex; padding: 3px 0; border-top: 1px solid #aaa; }
.status div { height: 19px; border-right: 1px solid #aaa; display: flex; align-items: center; flex: none; }
.status .s-empty { width: 367px; }
.status .s-pos { width: 204px; padding-left: 10px; gap: 6px; border: 0; }
.s-pos svg, .s-size svg { width: 14px; height: 12px; margin-bottom: 4px; }
.status .s-size { width: 210px; padding-left: 10px; gap: 6px; }
.s-doc { width: 23px; padding-left: 7px; }
.s-doc svg { width: 12px; height: 12px; margin-bottom: 2px; }
.s-gap { width: 30px; }
.s-slide { width: 75px; padding-left: 8px; }
.s-name { width: 235px; padding-left: 9px; }
.s-fit { width: 23px; padding-left: 6px; }
.s-fit svg { width: 12px; height: 12px; margin-bottom: 2px; }
.s-zoom svg { width: 143px; height: 18px; }
.status .s-pct { border: 0; padding-left: 11px; }

.taskbar { height: 28px; background: #1f1f1f; display: flex; align-items: center; padding-left: 5px; font-family: "DejaVu Sans", sans-serif; font-size: 13px; }
.logo { width: 18px; height: 20px; }
.tmenu { width: 50px; margin-left: 2px; font-weight: 700; color: #a8a8a8; padding-top: 3px; }
.desk { width: 22px; height: 22px; margin-right: 19px; }
.app-ic { width: 20px; height: 20px; margin-right: 6px; }
.task { align-self: stretch; width: 166px; margin-left: 13px; padding: 1px 0 0 3px; display: flex; align-items: center; gap: 5px; color: #fff; border-bottom: 2px solid #0a78d6; white-space: nowrap; }
.task b { letter-spacing: -0.180px; }
.task svg { width: 16px; height: 16px; }
.tray { margin-left: auto; display: flex; gap: 8px; align-items: center; padding-right: 4px; color: #a8a8a8; }
.tray svg { width: 16px; height: 16px; }
.tray b { margin-right: -1px; padding-top: 3px; }
```
